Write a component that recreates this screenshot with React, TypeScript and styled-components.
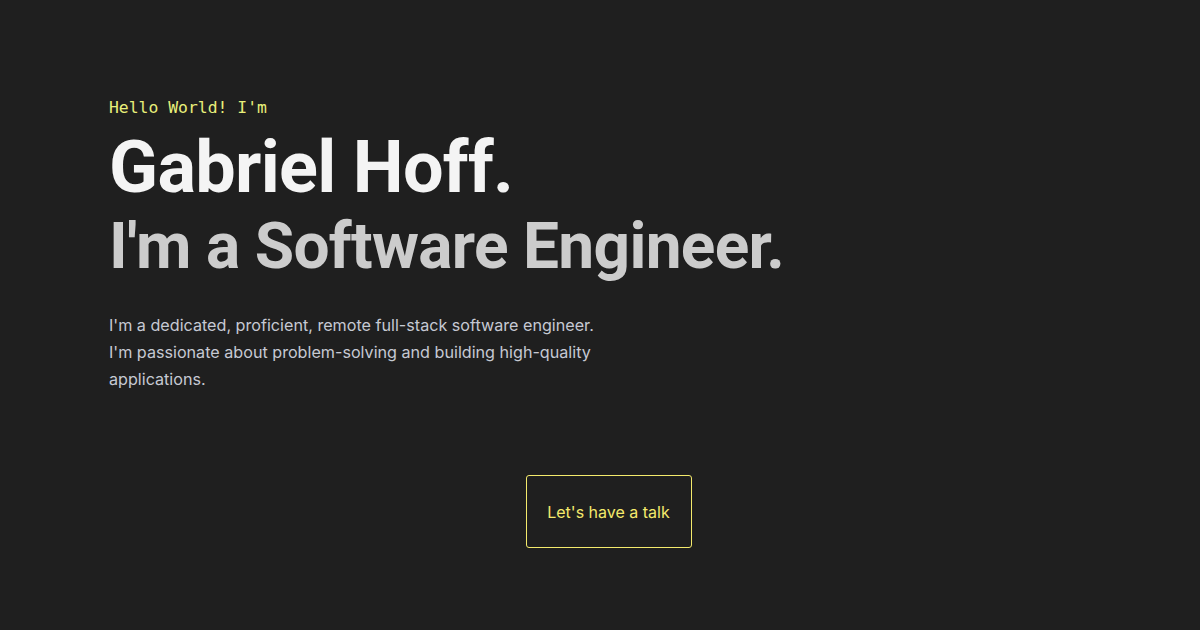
import React from "react";
import styled, { createGlobalStyle } from "styled-components";

const Global = createGlobalStyle`
  html, body { margin: 0; padding: 0; background: #1f1f1f; }
  body { font-family: Inter, "Liberation Sans", sans-serif; }
`;

const Page = styled.main`
  width: 1200px;
  height: 630px;
  box-sizing: border-box;
  padding: 98px 92px 0 109px;
  background: #1f1f1f;
  display: flex;
  flex-direction: column;
`;

const Greeting = styled.p`
  margin: 0;
  font-family: "DejaVu Sans Mono", "Liberation Mono", monospace;
  font-size: 16.4px;
  line-height: 20px;
  color: #e8ef7a;
`;

const Name = styled.h1`
  margin: 10px 0 0;
  font-family: Roboto, "Liberation Sans", sans-serif;
  font-weight: 700;
  font-size: 72px;
  line-height: 80px;
  letter-spacing: -0.7px;
  color: #f4f4f4;
`;

const Role = styled.h2`
  margin: 1px 0 0;
  font-family: Roboto, "Liberation Sans", sans-serif;
  font-weight: 700;
  font-size: 64px;
  line-height: 76px;
  letter-spacing: -0.7px;
  color: #cccccc;
`;

const Intro = styled.p`
  margin: 27px 0 0;
  max-width: 496px;
  font-family: Inter, "Liberation Sans", sans-serif;
  font-size: 16.15px;
  line-height: 27px;
  color: #c6c9d3;
`;

const Actions = styled.div`
  display: flex;
  justify-content: center;
  margin-top: 82px;
`;

const TalkButton = styled.a`
  display: flex;
  align-items: center;
  justify-content: center;
  width: 166px;
  height: 73px;
  box-sizing: border-box;
  border: 1px solid #f4ea6c;
  border-radius: 3px;
  color: #f4ea6c;
  font-family: Inter, "Liberation Sans", sans-serif;
  font-size: 16px;
  text-decoration: none;
`;

export default function App() {
  return (
    <>
      <Global />
      <Page>
        <Greeting>Hello World! I'm</Greeting>
        <Name>Gabriel Hoff.</Name>
        <Role>I'm a Software Engineer.</Role>
        <Intro>
          I'm a dedicated, proficient, remote full-stack software engineer.
          I'm passionate about problem-solving and building high-quality
          applications.
        </Intro>
        <Actions>
          <TalkButton href="#">Let's have a talk</TalkButton>
        </Actions>
      </Page>
    </>
  );
}
